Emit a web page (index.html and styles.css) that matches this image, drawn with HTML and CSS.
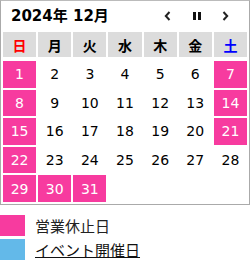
FILE: index.html
```html
<!DOCTYPE html>
<html lang="ja">
<head>
<meta charset="utf-8">
<link rel="stylesheet" href="styles.css">
</head>
<body>
<div class="cal">
  <div class="cal-head">
    <div class="cal-title">2024年 12月</div>
    <div class="cal-nav">
      <span class="nav-btn"><svg width="7" height="10" viewBox="0 0 7 10"><path d="M5.5 1 L1.8 5 L5.5 9" fill="none" stroke="#222" stroke-width="2"/></svg></span>
      <span class="nav-btn"><svg width="8" height="8" viewBox="0 0 8 8"><rect x="0" y="0" width="3" height="8" fill="#111"/><rect x="5" y="0" width="3" height="8" fill="#111"/></svg></span>
      <span class="nav-btn"><svg width="7" height="10" viewBox="0 0 7 10"><path d="M1.5 1 L5.2 5 L1.5 9" fill="none" stroke="#222" stroke-width="2"/></svg></span>
    </div>
  </div>
  <div class="grid">
    <div class="wd sun">日</div>
    <div class="wd">月</div>
    <div class="wd">火</div>
    <div class="wd">水</div>
    <div class="wd">木</div>
    <div class="wd">金</div>
    <div class="wd sat">土</div>

    <div class="d off">1</div><div class="d">2</div><div class="d">3</div><div class="d">4</div><div class="d">5</div><div class="d">6</div><div class="d off">7</div>
    <div class="d off">8</div><div class="d">9</div><div class="d">10</div><div class="d">11</div><div class="d">12</div><div class="d">13</div><div class="d off">14</div>
    <div class="d off">15</div><div class="d">16</div><div class="d">17</div><div class="d">18</div><div class="d">19</div><div class="d">20</div><div class="d off">21</div>
    <div class="d off">22</div><div class="d">23</div><div class="d">24</div><div class="d">25</div><div class="d">26</div><div class="d">27</div><div class="d">28</div>
    <div class="d off">29</div><div class="d off">30</div><div class="d off">31</div><div class="d empty"></div><div class="d empty"></div><div class="d empty"></div><div class="d empty"></div>
  </div>
</div>
<ul class="legend">
  <li class="legend-item"><span class="swatch pink"></span><span class="legend-text">営業休止日</span></li>
  <li class="legend-item"><span class="swatch blue"></span><a class="legend-link" href="#">イベント開催日</a></li>
</ul>
</body>
</html>
```
FILE: styles.css
```css
html, body {
  margin: 0;
  padding: 0;
  background: #fff;
}
body {
  font-family: "DejaVu Sans", "Noto Sans CJK JP", sans-serif;
  color: #111;
  width: 250px;
}
.cal {
  box-sizing: border-box;
  width: 250px;
  border: 1px solid #aaa;
  border-top-color: #bbb;
}
.cal-head {
  height: 29px;
  display: flex;
  align-items: center;
  justify-content: space-between;
  padding: 0 9px 0 10px;
}
.cal-title {
  font-weight: bold;
  font-size: 15px;
  line-height: 1;
  color: #000;
  padding-top: 1px;
}
.cal-nav {
  display: flex;
  align-items: center;
}
.nav-btn {
  width: 29px;
  height: 20px;
  display: flex;
  align-items: center;
  justify-content: center;
}
.grid {
  display: grid;
  grid-template-columns: repeat(7, 1fr);
  grid-template-rows: 27px repeat(5, 26.6px);
  gap: 2px;
  padding: 2px 2px 2px 2px;
}
.wd {
  background: #dcdcdc;
  height: 25px;
  display: flex;
  align-items: center;
  justify-content: center;
  font-weight: bold;
  font-size: 14px;
  color: #000;
}
.wd.sun { color: #f00; }
.wd.sat { color: #00f; }
.d {
  display: flex;
  align-items: center;
  justify-content: center;
  font-size: 14px;
  color: #000;
}
.d.off {
  background: #f73b9f;
  color: #fff;
}
.legend {
  list-style: none;
  margin: 10px 0 0 0;
  padding: 0;
  display: flex;
  flex-direction: column;
  gap: 3px;
}
.legend-item {
  display: flex;
  align-items: center;
  gap: 10px;
  height: 21px;
  font-size: 15px;
}
.swatch {
  width: 25px;
  height: 21px;
  flex: none;
}
.swatch.pink { background: #f73b9f; }
.swatch.blue { background: #63b9e9; }
.legend-text { color: #222; font-family: "Noto Sans CJK JP", sans-serif; }
.legend-link { color: #111; text-decoration: underline; font-family: "Noto Sans CJK JP", sans-serif; }
```
